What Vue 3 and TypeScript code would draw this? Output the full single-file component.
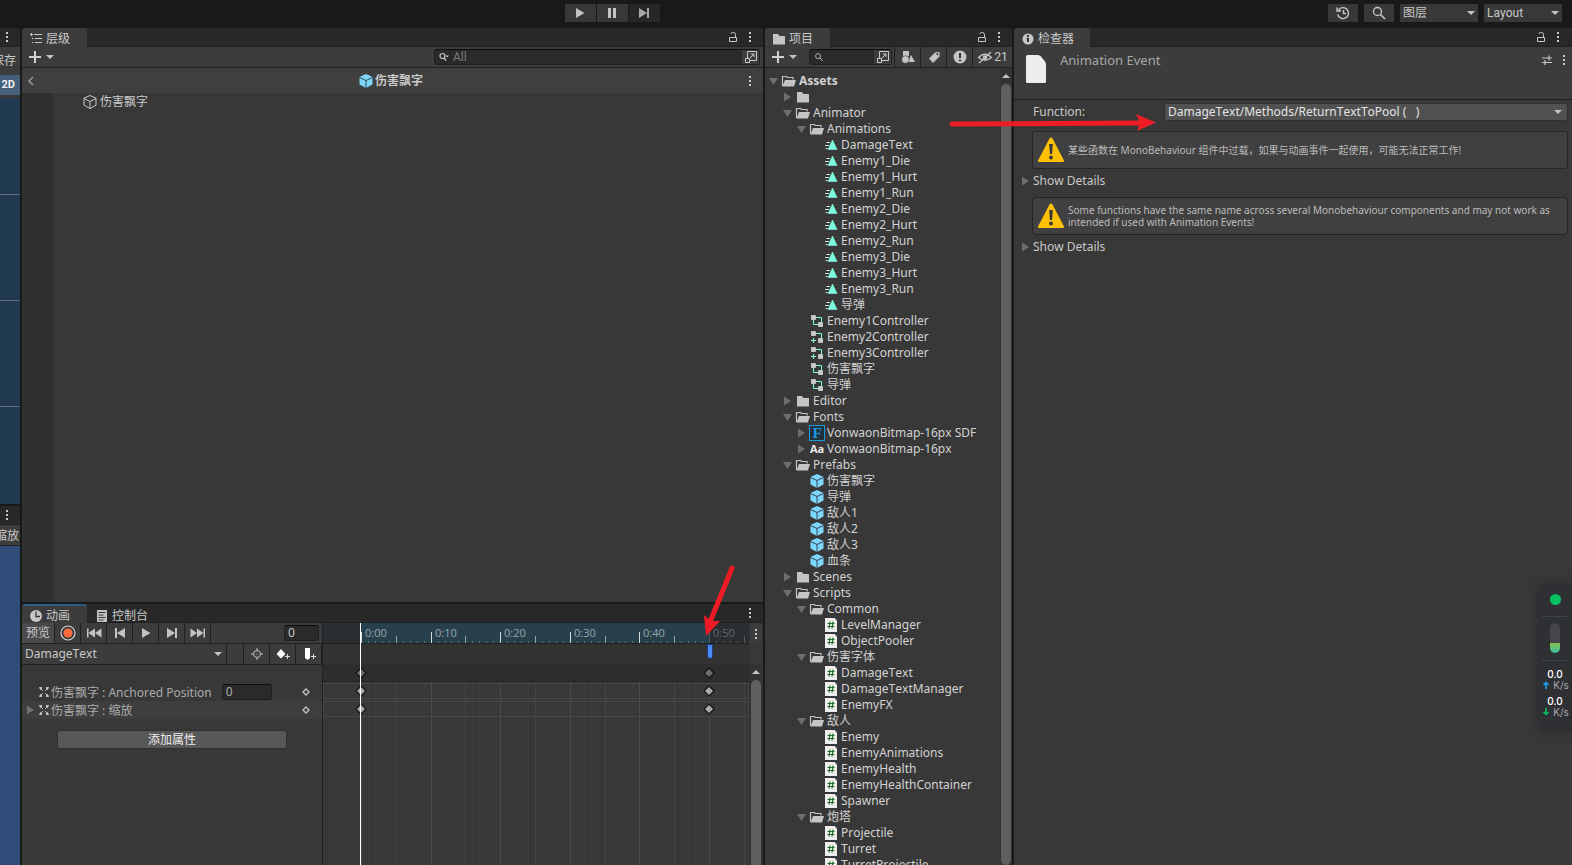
<script setup lang="ts">
import { ref } from 'vue'

type Kind = 'open' | 'folder' | 'clip' | 'ctrl' | 'ctrlplus' | 'sdf' | 'font' | 'prefab' | 'script'
interface Row { d: number; k: Kind; t: string; a?: 'down' | 'right'; b?: boolean }

const rows: Row[] = [
  { d: 0, k: 'open', t: 'Assets', a: 'down', b: true },
  { d: 1, k: 'folder', t: '', a: 'right' },
  { d: 1, k: 'open', t: 'Animator', a: 'down' },
  { d: 2, k: 'open', t: 'Animations', a: 'down' },
  ...['DamageText', 'Enemy1_Die', 'Enemy1_Hurt', 'Enemy1_Run', 'Enemy2_Die', 'Enemy2_Hurt', 'Enemy2_Run', 'Enemy3_Die', 'Enemy3_Hurt', 'Enemy3_Run', '导弹']
    .map((t): Row => ({ d: 3, k: 'clip', t })),
  { d: 2, k: 'ctrl', t: 'Enemy1Controller' },
  { d: 2, k: 'ctrlplus', t: 'Enemy2Controller' },
  { d: 2, k: 'ctrlplus', t: 'Enemy3Controller' },
  { d: 2, k: 'ctrl', t: '伤害飘字' },
  { d: 2, k: 'ctrl', t: '导弹' },
  { d: 1, k: 'folder', t: 'Editor', a: 'right' },
  { d: 1, k: 'open', t: 'Fonts', a: 'down' },
  { d: 2, k: 'sdf', t: 'VonwaonBitmap-16px SDF', a: 'right' },
  { d: 2, k: 'font', t: 'VonwaonBitmap-16px', a: 'right' },
  { d: 1, k: 'open', t: 'Prefabs', a: 'down' },
  ...['伤害飘字', '导弹', '敌人1', '敌人2', '敌人3', '血条'].map((t): Row => ({ d: 2, k: 'prefab', t })),
  { d: 1, k: 'folder', t: 'Scenes', a: 'right' },
  { d: 1, k: 'open', t: 'Scripts', a: 'down' },
  { d: 2, k: 'open', t: 'Common', a: 'down' },
  ...['LevelManager', 'ObjectPooler'].map((t): Row => ({ d: 3, k: 'script', t })),
  { d: 2, k: 'open', t: '伤害字体', a: 'down' },
  ...['DamageText', 'DamageTextManager', 'EnemyFX'].map((t): Row => ({ d: 3, k: 'script', t })),
  { d: 2, k: 'open', t: '敌人', a: 'down' },
  ...['Enemy', 'EnemyAnimations', 'EnemyHealth', 'EnemyHealthContainer', 'Spawner'].map((t): Row => ({ d: 3, k: 'script', t })),
  { d: 2, k: 'open', t: '炮塔', a: 'down' },
  ...['Projectile', 'Turret', 'TurretProjectile'].map((t): Row => ({ d: 3, k: 'script', t })),
]

const origin = 38
const end = 50
const at = (frame: number) => Math.round(origin + frame * 6.96)
const frames = Array.from({ length: 56 }, (_, i) => i)
const size = (f: number) => (f % 10 === 0 ? 'major' : f % 5 === 0 ? 'mid' : 'minor')
const labels = [0, 10, 20, 30, 40, 50]
const keys = [0, end]

const frame = ref('0')
const posX = ref('0')
const hierarchyQuery = ref('')
const projectQuery = ref('')
</script>

<template>
  <div class="editor">
    <svg class="defs" aria-hidden="true">
      <symbol id="kebab" viewBox="0 0 16 16"><path d="M7 3h2v2H7zM7 7h2v2H7zM7 11h2v2H7z" fill="#c8c8c8" /></symbol>
      <symbol id="lock" viewBox="0 0 16 16"><path d="M4.500 8.500h7v4h-7zM10.500 8V5.500q0-2-2-2h-1q-1.500 0-1.500 1.500" fill="none" stroke="#c8c8c8" /></symbol>
      <symbol id="tri-down" viewBox="0 0 16 16"><path d="M4 5h9l-4.500 7z" fill="#6e6e6e" /></symbol>
      <symbol id="tri-right" viewBox="0 0 16 16"><path d="M5 3.500v9l7-4.500z" fill="#6e6e6e" /></symbol>
      <symbol id="caret" viewBox="0 0 8 8"><path d="M0 2h8L4 6z" fill="#c4c4c4" /></symbol>
      <symbol id="plus" viewBox="0 0 16 16"><path d="M8 2v12M2 8h12" stroke="#d0d0d0" stroke-width="2" /></symbol>
      <symbol id="pick" viewBox="0 0 16 16"><path d="M4.500 9V2.500h9v9H7M2.500 9.500h4v4h-4zM7 9l4-4M8 5h3v3" fill="none" stroke="#c8c8c8" /></symbol>
      <symbol id="search" viewBox="0 0 16 16"><circle cx="6.500" cy="6.500" r="4" fill="none" stroke="#c8c8c8" stroke-width="1.300" /><path d="M9.500 9.500l4.500 4.500" stroke="#c8c8c8" stroke-width="1.600" /></symbol>
      <symbol id="open" viewBox="0 0 16 16"><path d="M1.500 13V3.500h4l1 1h5.500v2" fill="none" stroke="#c4c4c4" stroke-width="1.200" /><path d="M4 7h11l-2 6.500H1.500z" fill="#c4c4c4" /></symbol>
      <symbol id="folder" viewBox="0 0 16 16"><path d="M2 3h5l1.500 2H14v8.500H2z" fill="#c4c4c4" /></symbol>
      <symbol id="clip" viewBox="0 0 16 16"><path d="M9.500 3l4.500 9.500H5z" fill="#7ffbe2" stroke="#7ffbe2" stroke-linejoin="round" stroke-width=".6" /><path d="M3.500 5.500h3.500M2 8.500h4M2.500 11.500h2" stroke="#d0e4e0" /></symbol>
      <symbol id="ctrl" viewBox="0 0 16 16"><path d="M7 4.500h5.500V9M4.500 7v4.500H9" fill="none" stroke="#7ffbe2" /><rect x="2" y="2" width="5" height="5" rx="1" fill="#c8c8c8" /><rect x="9" y="9" width="5" height="5" rx="1" fill="#c8c8c8" /></symbol>
      <symbol id="ctrlplus" viewBox="0 0 16 16"><path d="M7 4.500h5.500V9M4.500 9v5M2 11.500h5" fill="none" stroke="#7ffbe2" /><rect x="2" y="2" width="5" height="5" rx="1" fill="#c8c8c8" /><rect x="9" y="9" width="5" height="5" rx="1" fill="#c8c8c8" /></symbol>
      <symbol id="prefab" viewBox="0 0 16 16"><path d="M8 1l6.500 3v7.500L8 15l-6.500-3.500V4z" fill="#7fd6fd" /><path d="M1.500 4.500L8 7.500l6.500-3M8 7.500V15" fill="none" stroke="#2f4652" /></symbol>
      <symbol id="cube" viewBox="0 0 16 16"><path d="M8 1.500l6 2.700v7L8 14.500l-6-3.300v-7zM2 4.500l6 3 6-3M8 7.500v7" fill="none" stroke="#c8c8c8" stroke-linejoin="round" /></symbol>
      <symbol id="script" viewBox="0 0 16 16"><path d="M2 1h9.500L14 3.500V15H2z" fill="#eeeeee" /><path d="M7 4.500L6 11.500M10 4.500L9 11.500M4.500 6.500h7M4.500 9.500h7" stroke="#1f6b2d" stroke-width="1.200" /></symbol>
      <symbol id="warn" viewBox="0 1 28 28"><path d="M14 2.500q1 0 1.500 1L27 25.500q.3 1.500-1.200 1.500H2.200Q.7 27 1 25.500L12.500 3.500q.5-1 1.500-1z" fill="#ffc107" /><path d="M12.200 9h3.600l-.7 10h-2.200z" fill="#383838" /><circle cx="14" cy="22.500" r="1.900" fill="#383838" /></symbol>
      <symbol id="play" viewBox="0 0 16 16"><path d="M4 3l8.500 5L4 13z" fill="#c4c4c4" /></symbol>
      <symbol id="pause" viewBox="0 0 16 16"><path d="M4 3h3v10H4zM9 3h3v10H9z" fill="#c4c4c4" /></symbol>
      <symbol id="next" viewBox="0 0 16 16"><path d="M3 3l8 5-8 5zM11 3h2v10h-2z" fill="#c4c4c4" /></symbol>
      <symbol id="prev" viewBox="0 0 16 16"><path d="M13 3L5 8l8 5zM3 3h2v10H3z" fill="#c4c4c4" /></symbol>
      <symbol id="first" viewBox="0 0 16 16"><path d="M1 3.500h1.500v9H1zM9 3.500v9L2.500 8zM15.500 3.500v9L9 8z" fill="#c4c4c4" /></symbol>
      <symbol id="last" viewBox="0 0 16 16"><path d="M13.500 3.500H15v9h-1.500zM7 3.500v9L13.500 8zM.5 3.500v9L7 8z" fill="#c4c4c4" /></symbol>
      <symbol id="move" viewBox="0 0 12 12"><path d="M1 1h3v3H2.500zM11 1H8v3h1.500zM1 11h3V8H2.500zM11 11H8V8h1.500z" fill="#c4c4c4" /><path d="M3.500 3.500L5 5M8.500 3.500L7 5M3.500 8.500L5 7M8.500 8.500L7 7M1 2.500L2.500 1M11 2.500L9.500 1M1 9.500L2.500 11M11 9.500L9.500 11" stroke="#a8a8a8" /></symbol>
      <symbol id="key" viewBox="0 0 12 12"><path d="M6 1l5 5-5 5-5-5z" fill="currentColor" stroke="#111" stroke-width="1.200" /></symbol>
    </svg>

    <header class="topbar">
      <div class="lead"></div>
      <div class="transport">
        <button aria-label="Play"><svg class="i16"><use href="#play" /></svg></button>
        <button aria-label="Pause"><svg class="i16"><use href="#pause" /></svg></button>
        <button aria-label="Step" class="dim"><svg class="i16"><use href="#next" /></svg></button>
      </div>
      <div class="side">
        <button aria-label="History">
          <svg class="i16" viewBox="0 0 16 16"><path d="M3.500 5a5.500 5.500 0 1 1-.8 4.500M2 2.500v3.500h4M8.500 5v3.500H11" fill="none" stroke="#c8c8c8" stroke-width="1.400" /></svg>
        </button>
        <button aria-label="Search"><svg class="i16"><use href="#search" /></svg></button>
        <span class="pop"><select aria-label="图层"><option>图层</option></select><svg class="caret"><use href="#caret" /></svg></span>
        <span class="pop"><select aria-label="Layout"><option>Layout</option></select><svg class="caret"><use href="#caret" /></svg></span>
      </div>
    </header>

    <main class="docks">
      <div class="column">
        <section class="panel scene">
          <div class="tabs"><button class="ic end" aria-label="Menu"><svg class="i16"><use href="#kebab" /></svg></button></div>
          <div class="strip"><span>保存</span></div>
          <button class="mode">2D</button>
          <div class="canvas grid"><i></i><i></i><i></i></div>
        </section>
        <section class="panel game">
          <div class="tabs"><button class="ic end" aria-label="Menu"><svg class="i16"><use href="#kebab" /></svg></button></div>
          <div class="strip low"><span>缩放</span></div>
          <div class="canvas flat"></div>
        </section>
      </div>

      <div class="column">
        <section class="panel hierarchy">
          <div class="tabs">
            <div class="tab">
              <svg class="i14" viewBox="0 0 14 14"><path d="M5 2.500h8M6 6.500h7M6 10.500h7M3 6.500h1.500M3 10.500h1.500M2.500 1v3M1 2.500h3" stroke="#c8c8c8" /></svg>层级
            </div>
            <span class="grow"></span>
            <button class="ic" aria-label="Lock"><svg class="i16"><use href="#lock" /></svg></button>
            <button class="ic" aria-label="Menu"><svg class="i16"><use href="#kebab" /></svg></button>
          </div>
          <div class="toolbar">
            <button class="add" aria-label="Create"><svg class="i16"><use href="#plus" /></svg><svg class="caret"><use href="#caret" /></svg></button>
            <span class="grow"></span>
            <div class="find wide">
              <svg class="i10" viewBox="0 0 10 10"><circle cx="3.500" cy="4" r="2.500" fill="none" stroke="#c8c8c8" stroke-width="1.200" /><path d="M5 6l2 2.500" stroke="#c8c8c8" stroke-width="1.300" /><path d="M6.500 3.500h3.500L8.200 5.500z" fill="#c8c8c8" /></svg>
              <input v-model="hierarchyQuery" aria-label="Search hierarchy" placeholder="All" />
              <button class="pick" aria-label="Open search"><svg class="i16"><use href="#pick" /></svg></button>
            </div>
          </div>
          <div class="crumb">
            <button class="ic" aria-label="Back"><svg class="i12" viewBox="0 0 12 12"><path d="M8 2L4 6l4 4" fill="none" stroke="#999" stroke-width="1.500" /></svg></button>
            <strong><svg class="i16"><use href="#prefab" /></svg>伤害飘字</strong>
            <button class="ic" aria-label="Menu"><svg class="i16"><use href="#kebab" /></svg></button>
          </div>
          <div class="objects">
            <div class="gutter"></div>
            <div class="object"><svg class="i16"><use href="#cube" /></svg>伤害飘字</div>
          </div>
        </section>

        <section class="panel animation">
          <div class="tabs">
            <div class="tab active">
              <svg class="i14" viewBox="0 0 14 14"><circle cx="7" cy="7" r="6" fill="#c4c4c4" /><path d="M7 2.500V7.500h4" fill="none" stroke="#333" stroke-width="1.300" /></svg>动画
            </div>
            <div class="tab idle">
              <svg class="i14" viewBox="0 0 14 14"><path d="M2 1h10v12H2z" fill="#c4c4c4" /><path d="M3.500 3.500h7M3.500 6h5M3.500 8.500h7M3.500 11h5" stroke="#333" /></svg>控制台
            </div>
            <span class="grow"></span>
            <button class="ic" aria-label="Menu"><svg class="i16"><use href="#kebab" /></svg></button>
          </div>
          <div class="anim">
            <div class="props">
              <div class="bar">
                <button class="preview">预览</button>
                <button aria-label="Record"><svg class="i16" viewBox="0 0 16 16"><circle cx="8" cy="8" r="7" fill="none" stroke="#d0d0d0" stroke-width="1.200" /><circle cx="8" cy="8" r="4.500" fill="#ff6b3c" /></svg></button>
                <button aria-label="First key"><svg class="i16"><use href="#first" /></svg></button>
                <button aria-label="Previous key"><svg class="i16"><use href="#prev" /></svg></button>
                <button aria-label="Play clip"><svg class="i16"><use href="#play" /></svg></button>
                <button aria-label="Next key"><svg class="i16"><use href="#next" /></svg></button>
                <button aria-label="Last key"><svg class="i16"><use href="#last" /></svg></button>
                <span class="grow"></span>
                <input v-model="frame" class="num" aria-label="Frame" />
              </div>
              <div class="bar">
                <span class="pop clipname"><select aria-label="Clip"><option>DamageText</option></select><svg class="caret"><use href="#caret" /></svg></span>
                <span class="blank"></span>
                <button aria-label="Filter"><svg class="i14" viewBox="0 0 14 14"><circle cx="7" cy="7" r="3.500" fill="none" stroke="#c4c4c4" /><path d="M7 1v3M7 10v3M1 7h3M10 7h3M6.500 7h1" stroke="#c4c4c4" /></svg></button>
                <button aria-label="Add key"><svg class="i16" viewBox="0 0 16 16"><path d="M6 3l4.500 5L6 12.500 1.500 8z" fill="#fff" /><path d="M12.500 8v5M10 10.500h5" stroke="#ddd" /></svg></button>
                <button aria-label="Add event"><svg class="i16" viewBox="0 0 16 16"><path d="M4 2h5v10l-2.500 2L4 12z" fill="#fff" /><path d="M12.500 8v5M10 10.500h5" stroke="#ddd" /></svg></button>
              </div>
              <div class="list">
                <div class="prop">
                  <span class="fold"></span><svg class="i12"><use href="#move" /></svg>
                  <label for="posx">伤害飘字 : Anchored Position</label>
                  <input id="posx" v-model="posX" class="num wide" />
                  <span class="grow"></span>
                  <svg class="dot" viewBox="0 0 8 8"><path d="M4 1l3 3-3 3-3-3z" fill="none" stroke="#c4c4c4" stroke-width="1.300" /></svg>
                </div>
                <div class="prop alt">
                  <button class="fold" aria-label="Expand"><svg class="i16"><use href="#tri-right" /></svg></button><svg class="i12"><use href="#move" /></svg>
                  <span>伤害飘字 : 缩放</span>
                  <span class="grow"></span>
                  <svg class="dot" viewBox="0 0 8 8"><path d="M4 1l3 3-3 3-3-3z" fill="none" stroke="#c4c4c4" stroke-width="1.300" /></svg>
                </div>
                <button class="addprop">添加属性</button>
              </div>
            </div>

            <div class="timeline">
              <div class="ruler">
                <div class="range" :style="{ left: at(0) + 'px', width: at(end) - at(0) + 'px' }"></div>
                <i v-for="f in frames" :key="f" :class="['tick', size(f), { past: f >= end }]" :style="{ left: at(f) + 'px' }"></i>
                <span v-for="l in labels" :key="l" :class="['mark', { past: l >= end }]" :style="{ left: at(l) + 4 + 'px' }">0:{{ String(l).padStart(2, '0') }}</span>
              </div>
              <div class="events"><i class="event" :style="{ left: at(end) - 1 + 'px' }"></i></div>
              <div class="track summary"><svg v-for="k in keys" :key="k" class="keyframe" :style="{ left: at(k) - 6 + 'px' }"><use href="#key" /></svg></div>
              <div class="sheet">
                <i v-for="f in frames" :key="f" :class="['line', size(f)]" :style="{ left: at(f) + 'px' }"></i>
                <div v-for="r in 2" :key="r" class="track"><svg v-for="k in keys" :key="k" class="keyframe" :style="{ left: at(k) - 6 + 'px' }"><use href="#key" /></svg></div>
              </div>
              <i class="playhead" :style="{ left: at(0) - 1 + 'px' }"></i>
            </div>
            <div class="rail">
              <button class="ic railmenu" aria-label="Timeline menu"><svg class="i16"><use href="#kebab" /></svg></button>
              <div class="railgap"></div>
              <svg class="up" viewBox="0 0 8 8"><path d="M0 6h8L4 2z" fill="#c4c4c4" /></svg>
              <div class="thumb"></div>
            </div>
          </div>
        </section>
      </div>

      <section class="panel project">
        <div class="tabs">
          <div class="tab"><svg class="i14" viewBox="1 1 14 14"><use href="#folder" width="16" height="16" /></svg>项目</div>
          <span class="grow"></span>
          <button class="ic" aria-label="Lock"><svg class="i16"><use href="#lock" /></svg></button>
          <button class="ic" aria-label="Menu"><svg class="i16"><use href="#kebab" /></svg></button>
        </div>
        <div class="toolbar">
          <button class="add" aria-label="Create"><svg class="i16"><use href="#plus" /></svg><svg class="caret"><use href="#caret" /></svg></button>
          <div class="find narrow">
            <svg class="i10"><use href="#search" /></svg>
            <input v-model="projectQuery" aria-label="Search project" />
            <button class="pick" aria-label="Open search"><svg class="i16"><use href="#pick" /></svg></button>
          </div>
          <button class="cell" aria-label="Filter by type"><svg class="i14" viewBox="0 0 14 14"><path d="M2 1h6v5H2zM10 5l4 7H7z" fill="#c4c4c4" /><circle cx="4.500" cy="9.500" r="3.800" fill="#c4c4c4" stroke="#3c3c3c" stroke-width=".6" /></svg></button>
          <button class="cell" aria-label="Filter by label"><svg class="i14" viewBox="0 0 14 14"><path d="M8 2.500l4.500-.5v4.500L6 13 2 8.500z" fill="#c4c4c4" /><circle cx="10.300" cy="4.200" r="1" fill="#3c3c3c" /></svg></button>
          <button class="cell" aria-label="Import log"><svg class="i14" viewBox="0 0 14 14"><circle cx="7" cy="7" r="6.500" fill="#c4c4c4" /><path d="M6 3h2v5H6zM6 9.500h2v1.700H6z" fill="#333" /></svg></button>
          <button class="cell hidden-count"><svg class="i16" viewBox="0 0 16 16"><path d="M1.500 8.500Q8 2 14.500 8.500 8 14 1.500 8.500zM2 14L14 3" fill="none" stroke="#c4c4c4" stroke-width="1.300" /><circle cx="8" cy="8.500" r="2.300" fill="#c4c4c4" /></svg>21</button>
        </div>
        <div class="assets">
          <ul class="tree">
            <li v-for="(r, i) in rows" :key="i" :class="{ bold: r.b }" :style="{ paddingLeft: r.d * 14 + 'px' }">
              <button v-if="r.a" class="twist" :aria-label="r.t || 'Folder'"><svg class="i16"><use :href="'#tri-' + r.a" /></svg></button>
              <span v-else class="twist"></span>
              <span v-if="r.k === 'sdf'" class="glyph sdf">F</span>
              <span v-else-if="r.k === 'font'" class="glyph aa">Aa</span>
              <svg v-else class="i16"><use :href="'#' + r.k" /></svg>
              <span class="name">{{ r.t }}</span>
            </li>
          </ul>
          <div class="rail">
            <svg class="up" viewBox="0 0 8 8"><path d="M0 6h8L4 2z" fill="#c4c4c4" /></svg>
            <div class="thumb"></div>
          </div>
        </div>
      </section>

      <section class="panel inspector">
        <div class="tabs">
          <div class="tab"><svg class="i14" viewBox="0 0 14 14"><circle cx="7" cy="7" r="5.500" fill="#c8c8c8" /><path d="M6 3h2v2H6zM5.500 6H8v4H6V7h-.5z" fill="#333" /></svg>检查器</div>
          <span class="grow"></span>
          <button class="ic" aria-label="Lock"><svg class="i16"><use href="#lock" /></svg></button>
          <button class="ic" aria-label="Menu"><svg class="i16"><use href="#kebab" /></svg></button>
        </div>
        <div class="title">
          <svg class="page" viewBox="0 0 20 28"><path d="M1.500 0h10.500q1.500 0 3 1.500l4 5q1 1.500 1 3V26.500q0 1.500-1.500 1.500h-17Q0 28 0 26.500V1.500Q0 0 1.500 0z" fill="#eee" /></svg>
          <h1>Animation Event</h1>
          <button class="ic" aria-label="Presets"><svg class="i12" viewBox="0 0 12 12"><path d="M1 4h10M1 8.500h10M8 1.500v5M4 6v5" stroke="#c8c8c8" stroke-width="1.200" /></svg></button>
          <button class="ic" aria-label="Menu"><svg class="i16"><use href="#kebab" /></svg></button>
        </div>
        <div class="fields">
          <div class="field">
            <label for="fn">Function:</label>
            <span class="pop fn"><select id="fn"><option>DamageText/Methods/ReturnTextToPool (&nbsp;&nbsp; )</option></select><svg class="caret"><use href="#caret" /></svg></span>
          </div>
          <div class="help"><svg class="i28"><use href="#warn" /></svg><p>某些函数在 MonoBehaviour 组件中过载，如果与动画事件一起使用，可能无法正常工作!</p></div>
          <button class="details"><svg class="i16"><use href="#tri-right" /></svg>Show Details</button>
          <div class="help"><svg class="i28"><use href="#warn" /></svg><p>Some functions have the same name across several Monobehaviour components and may not work as intended if used with Animation Events!</p></div>
          <button class="details"><svg class="i16"><use href="#tri-right" /></svg>Show Details</button>
        </div>
      </section>
    </main>

    <aside class="monitor">
      <i class="lamp"></i>
      <div class="gauge"><i></i></div>
      <div class="rates">
        <b>0.0</b>
        <span><svg class="i10" viewBox="0 0 10 10"><path d="M5 9V3M2.500 5L5 2.500 7.500 5" fill="none" stroke="#1ea7ff" stroke-width="1.500" /></svg>K/s</span>
        <b>0.0</b>
        <span><svg class="i10" viewBox="0 0 10 10"><path d="M5 1v6M2.500 5L5 7.500 7.500 5" fill="none" stroke="#07c160" stroke-width="1.500" /></svg>K/s</span>
      </div>
    </aside>

    <svg class="notes" viewBox="0 0 1572 865" preserveAspectRatio="none" aria-hidden="true">
      <g fill="#ed1c24" stroke="#ed1c24">
        <path d="M952 124L1140 123M732 568L710 622" stroke-width="5" stroke-linecap="round" />
        <path d="M1136 114l20 8.500-19 8.500 3-8zM704 615l7 6 9 0-14 15z" stroke="none" />
      </g>
    </svg>
  </div>
</template>

<style>
html, body { margin: 0; background: #191919; overflow: hidden; }
</style>

<style scoped>
.editor {
  position: relative; display: flex; flex-direction: column; height: 100vh; overflow: hidden;
  background: #191919; color: #c8c8c8;
  font: 12px/16px "Noto Sans", "Noto Sans CJK SC", sans-serif;
  font-kerning: none;
}
.editor * { box-sizing: border-box; }
.defs { position: absolute; width: 0; height: 0; }
svg { display: block; flex: none; }
.i16 { width: 16px; height: 16px; }
.i14 { width: 14px; height: 14px; }
.i12 { width: 12px; height: 12px; }
.i10 { width: 10px; height: 10px; }
.i28 { width: 28px; height: 28px; }
.caret { width: 8px; height: 8px; }
button, input, select { margin: 0; padding: 0; border: 0; border-radius: 0; background: none; color: inherit; font: inherit; font-kerning: none; outline: 0; }
button { display: flex; align-items: center; justify-content: center; flex: none; }
select { appearance: none; width: 100%; height: 100%; }
.grow { flex: 1; }

.topbar { display: flex; flex: none; height: 28px; padding: 4px 10px 6px; }
.lead { width: 36%; margin-right: -4px; }
.side { flex: 1; display: flex; justify-content: flex-end; gap: 6px; }
.side button { width: 30px; background: #383838; }
.transport { display: flex; gap: 1px; }
.transport button { width: 31px; background: #383838; }
.transport .dim { background: #2a2a2a; opacity: .85; }
.pop { position: relative; display: block; }
.pop .caret { position: absolute; right: 3px; top: 50%; margin-top: -4px; pointer-events: none; }
.side .pop { width: 78px; background: #383838; }
.side select { padding-left: 3px; font-family: Roboto, "Noto Sans CJK SC", sans-serif; }

.docks { flex: 1; min-height: 0; display: grid; gap: 2px; grid-template-columns: 20px minmax(0, 741fr) minmax(0, 247fr) minmax(0, 558fr); }
.column { display: flex; flex-direction: column; gap: 2px; min-height: 0; min-width: 0; }
.panel { display: flex; flex-direction: column; min-width: 0; min-height: 0; overflow: hidden; background: #383838; border-radius: 3px 3px 0 0; }
.tabs { display: flex; align-items: center; flex: none; height: 19px; padding-right: 5px; background: #282828; border-bottom: 1px solid #202020; }
.tab { display: flex; align-items: center; gap: 3px; flex: none; height: 19px; min-width: 65px; padding: 2px 16px 0 7px; margin-bottom: -1px; background: #3c3c3c; border-radius: 3px 3px 0 0; }
.tab.active { border-top: 2px solid #2c5d87; }
.tab.idle { background: none; padding-left: 8px; padding-top: 4px; }
.ic { width: 17px; height: 16px; }
.inspector .tabs { padding-right: 6px; }

.scene { flex: 476; }
.game { flex: 359; }
.column:first-child .tabs { padding: 0; }
.end { width: 14px; }
.strip { display: flex; justify-content: flex-end; align-items: center; flex: none; height: 28px; padding-right: 4px; background: #3c3c3c; white-space: nowrap; overflow: hidden; }
.strip.low { height: 21px; padding: 1px 1px 0 0; border-bottom: 1px solid #202020; }
.mode { height: 20px; background: #46607c; color: #eee; font: bold 11px/16px Roboto, sans-serif; padding-right: 5px; justify-content: flex-end; margin-bottom: 3px; }
.canvas { flex: 1; }
.grid { background: #213a52; display: flex; flex-direction: column; padding-top: 96px; gap: 105px; }
.grid i { height: 1px; background: #60707e; }
.flat { background: #304d7a; }

.hierarchy { flex: 1; }
.toolbar { display: flex; align-items: center; flex: none; height: 21px; background: #3c3c3c; border-bottom: 1px solid #202020; }
.add { gap: 3px; width: 36px; }
.find { display: flex; align-items: center; height: 16px; background: #2a2a2a; border: 1px solid #202020; border-top-color: #0d0d0d; border-radius: 3px; }
.find input { flex: 1; min-width: 0; height: 14px; padding-left: 4px; }
.find input::placeholder { color: #7b7b7b; opacity: 1; font-family: Roboto, sans-serif; }
.find .i10 { margin-left: 4px; }
.find.wide { width: 326px; margin-right: 3px; }
.find.narrow { width: 83px; margin: 0 2px 0 8px; }
.pick { width: 17px; height: 14px; background: #3c3c3c; }
.crumb { display: flex; align-items: center; justify-content: space-between; flex: none; height: 25px; background: #3f3f3f; padding-right: 4px; }
.crumb strong { display: flex; align-items: center; gap: 1px; }
.objects { flex: 1; display: flex; align-items: flex-start; }
.gutter { align-self: stretch; width: 32px; background: #303030; }
.object { display: flex; align-items: center; gap: 2px; margin: 1px 0 0 28px; }

.animation { flex: none; height: 261px; }
.anim { flex: 1; display: flex; min-height: 0; }
.props { display: flex; flex-direction: column; width: 301px; border-right: 1px solid #202020; }
.bar { display: flex; flex: none; height: 21px; background: #3c3c3c; border-bottom: 1px solid #202020; align-items: stretch; }
.bar button { width: 26px; border-right: 1px solid #202020; }
.bar .preview { width: 33px; background: #4a4a4a; }
.num { width: 35px; height: 16px; margin: 2px 3px 0 0; padding-left: 3px; background: #2a2a2a; border: 1px solid #202020; border-top-color: #0d0d0d; border-radius: 3px; }
.num.wide { width: 50px; margin: 0 0 1px 10px; }
.clipname { flex: 1; border-right: 1px solid #202020; }
.clipname select { padding-left: 3px; }
.clipname .caret { right: 4px; }
.blank { width: 17px; border-right: 1px solid #202020; }
.list { display: flex; flex-direction: column; padding-top: 18px; color: #aaa; }
.prop { display: flex; align-items: center; height: 18px; padding-right: 12px; white-space: nowrap; }
.prop label, .prop > span { padding-top: 1px; }
.prop .i12 { margin-right: 1px; width: 12px; }
.prop.alt { background: #3e3e3e; }
.fold { width: 16px; height: 16px; }
.dot { width: 8px; height: 8px; }
.addprop { margin: 11px 35px 0; height: 19px; background: #585858; border: 1px solid #303030; border-radius: 3px; color: #eee; }

.timeline { position: relative; flex: 1; min-width: 0; display: flex; flex-direction: column; overflow: hidden; }
.ruler { position: relative; height: 21px; background: #292e32; border-bottom: 1px solid #202020; }
.range { position: absolute; top: 0; bottom: 0; background: #28404c; }
.tick { position: absolute; bottom: 0; width: 1px; background: #5f7078; }
.tick.minor { height: 2px; }
.tick.mid { height: 7px; background: #98a3a8; }
.tick.major { height: 11px; background: #d5dadc; }
.tick.past { background: #55595c; }
.mark { position: absolute; top: 2px; font: 11px/16px "Open Sans", sans-serif; color: #9aa5aa; }
.mark.past { color: #62686c; }
.events { position: relative; height: 20px; background: #323232; }
.event { position: absolute; top: 1px; width: 4px; height: 13px; background: #4a8cf7; box-shadow: 0 0 0 1px #1e3c75; border-radius: 0 0 2px 2px; }
.track { position: relative; height: 16px; margin: 1px 0 2px; box-shadow: inset 0 0 0 1px #464646; }
.track.summary { height: 18px; margin: 0; box-shadow: none; border-bottom: 1px solid #252525; background: #2e2e2e; }
.keyframe { position: absolute; top: 2px; width: 12px; height: 12px; color: #a8a8a8; }
.summary .keyframe { top: 3px; color: #6e6e6e; }
.sheet { position: relative; flex: 1; }
.line { position: absolute; top: 0; bottom: 0; width: 1px; background: #3c3c3c; }
.line.mid { background: #434343; }
.line.major { background: #4a4a4a; }
.playhead { position: absolute; top: 0; bottom: 0; width: 1px; background: #fff; }

.rail { display: flex; flex-direction: column; align-items: center; flex: none; width: 14px; background: #333; }
.railmenu { width: 12px; height: 21px; background: #3c3c3c; }
.railgap { height: 20px; width: 13px; background: #383838; }
.up { width: 8px; height: 8px; margin: 4px 0; }
.thumb { flex: 1; width: 10px; background: #5f5f5f; border-radius: 5px 5px 0 0; }

.cell { width: 26px; height: 20px; border-left: 1px solid #202020; }
.hidden-count { flex: 1; gap: 1px; font-family: Roboto, sans-serif; }
.assets { flex: 1; min-height: 0; display: flex; }
.assets .rail { width: 12px; }
.assets .thumb { border-radius: 5px; }
.tree { flex: 1; min-width: 0; margin: 0; padding: 5px 0 0; list-style: none; overflow: hidden; color: #d2d2d2; }
.tree li { display: flex; align-items: center; height: 16px; white-space: nowrap; }
.twist { width: 16px; height: 16px; flex: none; }
.name { margin-left: 2px; }
.bold { font-weight: bold; }
.glyph { flex: none; width: 16px; height: 16px; display: flex; align-items: center; justify-content: center; }
.sdf { border: 1px solid #1a9be0; color: #1a9be0; font: bold 15px/14px "Liberation Serif", serif; background: #23313b; }
.aa { font: bold 11px/16px "Open Sans", sans-serif; color: #eee; }

.title { display: flex; align-items: flex-start; flex: none; height: 53px; padding: 5px 0 0 12px; background: #3c3c3c; border-bottom: 1px solid #202020; }
.page { width: 20px; height: 28px; margin-top: 3px; }
.title h1 { flex: 1; margin: 0 0 0 14px; font: 13px/16px "Noto Sans", sans-serif; font-kerning: none; color: #a8a8a8; }
.fields { display: flex; flex-direction: column; padding: 3px 4px 0 3px; }
.field { display: flex; align-items: center; height: 18px; padding-left: 16px; }
.field label { width: 131px; }
.fn { flex: 1; height: 18px; background: #515151; border: 1px solid #303030; border-radius: 3px; color: #e4e4e4; }
.fn select { padding-left: 3px; }
.fn .caret { right: 5px; }
.help { display: flex; align-items: center; gap: 3px; height: 38px; margin: 10px 0 0 15px; padding: 0 4px; background: #404040; border: 1px solid #252525; border-radius: 3px; }
.help p { margin: 0; font-size: 10px; line-height: 12px; color: #bcbcbc; }
.help ~ .help { margin-top: 4px; }
.details { justify-content: flex-start; height: 24px; }

.monitor { position: absolute; right: 0; top: 584px; width: 34px; padding: 10px 0 9px; display: flex; flex-direction: column; align-items: center; background: #2e3034; border-radius: 8px 0 0 8px; box-shadow: 0 0 8px #2a2a2a; }
.lamp { width: 11px; height: 11px; border-radius: 50%; background: #07c160; }
.gauge { width: 26px; margin-top: 11px; padding: 6px 8px 7px; border: solid #3f444a; border-width: 1px 0; }
.gauge::before { content: ""; display: block; height: 20px; background: #45464a; border-radius: 5px 5px 0 0; }
.gauge i { display: block; height: 10px; background: linear-gradient(#86c24a, #3cc0a8); border-radius: 0 0 5px 5px; }
.rates { display: flex; flex-direction: column; align-items: center; margin-top: 7px; font: 10px/12px Inter, sans-serif; }
.rates b { font-weight: 500; color: #fff; line-height: 12px; }
.rates span { display: flex; align-items: center; gap: 2px; line-height: 10px; color: #aaa; margin-bottom: 5px; }
.notes { position: absolute; inset: 0; width: 100%; height: 100%; pointer-events: none; }
</style>
